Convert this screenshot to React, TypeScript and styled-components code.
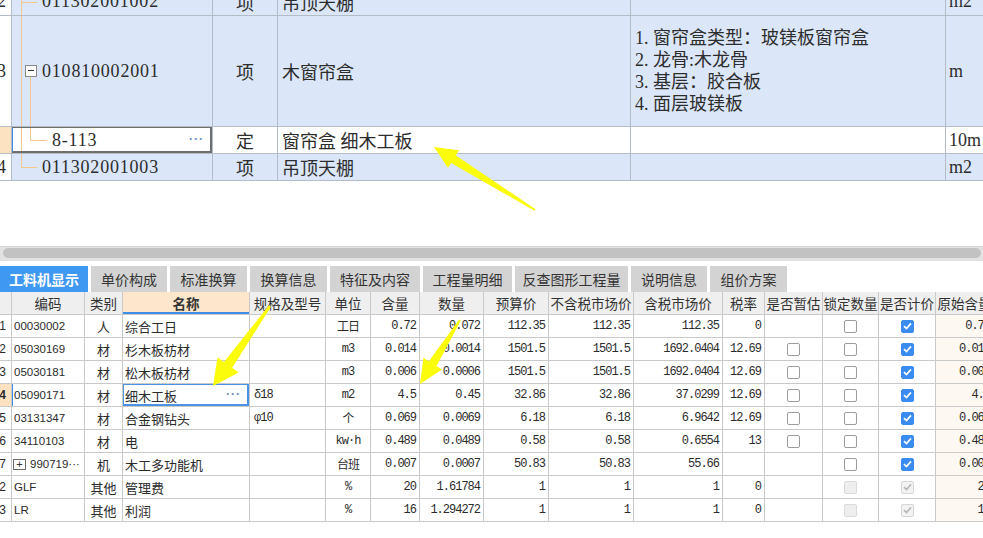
import React from 'react'
import styled, { createGlobalStyle, css } from 'styled-components'

const GlobalStyle = createGlobalStyle`
   html, body {
      margin: 0;
      padding: 0;
      background: #fff;
   }
   body {
      width: 983px;
      height: 538px;
      overflow: hidden;
   }
`

const CJK = '"Noto Sans CJK SC", sans-serif'
const TOP_FONT = '"Liberation Serif", "Noto Sans CJK SC", serif'
const MONO = '"Liberation Mono", "Noto Sans CJK SC", monospace'
const SANS = '"Liberation Sans", "Noto Sans CJK SC", sans-serif'

type Pt = [number, number]

// tapered annotation arrow, tail -> tip
const arrowPoints = (tail: Pt, tip: Pt, headLen: number, headHalf: number, neck: number, tailHalf: number) => {
   const dx = tip[0] - tail[0]
   const dy = tip[1] - tail[1]
   const len = Math.hypot(dx, dy)
   const ux = dx / len
   const uy = dy / len
   const nx = -uy
   const ny = ux
   const bx = tip[0] - ux * headLen
   const by = tip[1] - uy * headLen
   const pts: Pt[] = [
      [tail[0] + nx * tailHalf, tail[1] + ny * tailHalf],
      [bx + nx * neck, by + ny * neck],
      [bx + nx * headHalf, by + ny * headHalf],
      tip,
      [bx - nx * headHalf, by - ny * headHalf],
      [bx - nx * neck, by - ny * neck],
      [tail[0] - nx * tailHalf, tail[1] - ny * tailHalf],
   ]
   return pts.map(p => `${p[0].toFixed(1)},${p[1].toFixed(1)}`).join(' ')
}

/* ---------- upper grid ---------- */

type Tree = 'first' | 'parent' | 'child' | 'last'

type TopRow = {
   no: string
   tree: Tree
   code: string
   kind: string
   name: string
   desc: string[]
   unit: string
   height: number
   selected?: boolean
}

const topRows: TopRow[] = [
   { no: '12', tree: 'first', code: '011302001002', kind: '项', name: '吊顶天棚', desc: [], unit: 'm2', height: 28 },
   {
      no: '13',
      tree: 'parent',
      code: '010810002001',
      kind: '项',
      name: '木窗帘盒',
      desc: ['1. 窗帘盒类型：玻镁板窗帘盒', '2. 龙骨:木龙骨', '3. 基层：胶合板', '4. 面层玻镁板'],
      unit: 'm',
      height: 111,
   },
   { no: '', tree: 'child', code: '8-113', kind: '定', name: '窗帘盒 细木工板', desc: [], unit: '10m', height: 27, selected: true },
   { no: '14', tree: 'last', code: '011302001003', kind: '项', name: '吊顶天棚', desc: [], unit: 'm2', height: 27 },
]

const Page = styled.div`
   position: relative;
   width: 983px;
   height: 538px;
   overflow: hidden;
   background: #fff;
   display: flex;
   flex-direction: column;
`

const TopView = styled.section`
   height: 181px;
   overflow: hidden;
   flex: none;
`

const TopGrid = styled.div<{ $rows: string }>`
   margin-top: -12px;
   width: 1000px;
   display: grid;
   grid-template-columns: 12px 201px 65px 353px 315px 54px;
   grid-template-rows: ${p => p.$rows};
   font-family: ${TOP_FONT};
   font-size: 18px;
   color: #2d2d2d;
`

const TopCell = styled.div<{ $bg: string; $align?: 'left' | 'center' | 'right'; $pad?: number }>`
   position: relative;
   box-sizing: border-box;
   border-right: 1px solid #b4bcc7;
   border-bottom: 1px solid #b4bcc7;
   background: ${p => p.$bg};
   display: flex;
   align-items: center;
   justify-content: ${p => (p.$align === 'center' ? 'center' : p.$align === 'right' ? 'flex-end' : 'flex-start')};
   padding-left: ${p => p.$pad ?? 0}px;
   white-space: nowrap;
   overflow: hidden;
`

const TopNo = styled(TopCell)`
   justify-content: flex-end;
   padding-right: 5px;
`

const CodeText = styled.span`
   letter-spacing: 0.8px;
`

const Desc = styled.div`
   display: flex;
   flex-direction: column;
   line-height: 22px;
`

const VLine = styled.i<{ $x: number; $top: string; $bottom: string }>`
   position: absolute;
   left: ${p => p.$x}px;
   top: ${p => p.$top};
   bottom: ${p => p.$bottom};
   width: 1px;
   background: #f3c88d;
`

const HLine = styled.i<{ $x: number; $w: number }>`
   position: absolute;
   left: ${p => p.$x}px;
   top: 50%;
   width: ${p => p.$w}px;
   height: 1px;
   background: #f3c88d;
`

const Toggle = styled.span`
   position: absolute;
   left: 13px;
   top: 50%;
   margin-top: -6px;
   width: 12px;
   height: 12px;
   box-sizing: border-box;
   border: 1px solid #8a8a8a;
   background: #fff;

   &::after {
      content: '';
      position: absolute;
      left: 2px;
      right: 2px;
      top: 4px;
      height: 1px;
      background: #333;
   }
`

const Ellipsis = styled.span`
   position: absolute;
   right: 8px;
   top: 50%;
   transform: translateY(-55%);
   font-family: ${SANS};
   font-size: 12px;
   font-weight: bold;
   letter-spacing: 1px;
   color: #6a8cc0;
`

const TopSelection = styled.span`
   position: absolute;
   left: -1px;
   top: -1px;
   right: 0;
   bottom: 0;
   border: 2px solid #6e6e6e;
   border-left-color: #3d8be8;
   pointer-events: none;
`

const TreeGuides = ({ tree }: { tree: Tree }) => {
   switch (tree) {
      case 'first':
         return (
            <>
               <VLine $x={9} $top='0' $bottom='0' />
               <HLine $x={9} $w={16} />
            </>
         )
      case 'parent':
         return (
            <>
               <VLine $x={9} $top='0' $bottom='0' />
               <Toggle />
               <VLine $x={18} $top='calc(50% + 6px)' $bottom='0' />
            </>
         )
      case 'child':
         return (
            <>
               <VLine $x={9} $top='0' $bottom='0' />
               <VLine $x={18} $top='0' $bottom='50%' />
               <HLine $x={18} $w={17} />
            </>
         )
      default:
         return (
            <>
               <VLine $x={9} $top='0' $bottom='50%' />
               <HLine $x={9} $w={16} />
            </>
         )
   }
}

const UpperGrid = () => (
   <TopView>
      <TopGrid $rows={topRows.map(r => `${r.height}px`).join(' ')}>
         {topRows.map(r => {
            const bg = r.selected ? '#fff' : '#dbe7f9'
            return (
               <React.Fragment key={r.code}>
                  <TopNo $bg={r.selected ? '#fde2c1' : '#fff'}>{r.no}</TopNo>
                  <TopCell $bg={bg} $pad={r.tree === 'child' ? 40 : 30}>
                     <TreeGuides tree={r.tree} />
                     <CodeText>{r.code}</CodeText>
                     {r.selected && <Ellipsis>···</Ellipsis>}
                     {r.selected && <TopSelection />}
                  </TopCell>
                  <TopCell $bg={bg} $align='center'>{r.kind}</TopCell>
                  <TopCell $bg={bg} $pad={4}>{r.name}</TopCell>
                  <TopCell $bg={bg} $pad={4}>
                     <Desc>
                        {r.desc.map(d => (
                           <span key={d}>{d}</span>
                        ))}
                     </Desc>
                  </TopCell>
                  <TopCell $bg={bg} $pad={3}>{r.unit}</TopCell>
               </React.Fragment>
            )
         })}
      </TopGrid>
   </TopView>
)

/* ---------- scrollbar + tabs ---------- */

const ScrollTrack = styled.div`
   margin-top: 65px;
   height: 15px;
   box-sizing: border-box;
   background: #e2e2e2;
   border-top: 1px solid #d6d6d6;
   padding: 1px 2px 3px 3px;
   flex: none;
`

const Thumb = styled.div`
   height: 100%;
   border-radius: 6px;
   background: #c2c2c2;
`

const TabBar = styled.nav`
   margin-top: 5px;
   height: 26px;
   display: flex;
   gap: 3px;
   flex: none;
`

const Tab = styled.div<{ $w: number; $active?: boolean }>`
   width: ${p => p.$w}px;
   display: flex;
   align-items: center;
   justify-content: center;
   font-family: ${CJK};
   font-size: 14px;
   color: #333;
   background: #d3d3d3;

   ${p =>
      p.$active &&
      css`
         background: #3f98f2;
         color: #fff;
         font-weight: bold;
      `}
`

const tabs: [string, number][] = [
   ['工料机显示', 88],
   ['单价构成', 76],
   ['标准换算', 77],
   ['换算信息', 77],
   ['特征及内容', 90],
   ['工程量明细', 89],
   ['反查图形工程量', 113],
   ['说明信息', 76],
   ['组价方案', 77],
]

/* ---------- lower grid ---------- */

type Box = 'none' | 'off' | 'on' | 'disOff' | 'disOn'

type Item = {
   no: string
   code: string
   expand?: boolean
   kind: string
   name: string
   spec: string
   unit: string
   qty: string
   amount: string
   budget: string
   market: string
   marketTax: string
   tax: string
   est: Box
   lock: Box
   price: Box
   orig: string
   selected?: boolean
}

const items: Item[] = [
   { no: '1', code: '00030002', kind: '人', name: '综合工日', spec: '', unit: '工日', qty: '0.72', amount: '0.072', budget: '112.35', market: '112.35', marketTax: '112.35', tax: '0', est: 'none', lock: 'off', price: 'on', orig: '0.72' },
   { no: '2', code: '05030169', kind: '材', name: '杉木板枋材', spec: '', unit: 'm3', qty: '0.014', amount: '0.0014', budget: '1501.5', market: '1501.5', marketTax: '1692.0404', tax: '12.69', est: 'off', lock: 'off', price: 'on', orig: '0.014' },
   { no: '3', code: '05030181', kind: '材', name: '松木板枋材', spec: '', unit: 'm3', qty: '0.006', amount: '0.0006', budget: '1501.5', market: '1501.5', marketTax: '1692.0404', tax: '12.69', est: 'off', lock: 'off', price: 'on', orig: '0.006' },
   { no: '4', code: '05090171', kind: '材', name: '细木工板', spec: 'δ18', unit: 'm2', qty: '4.5', amount: '0.45', budget: '32.86', market: '32.86', marketTax: '37.0299', tax: '12.69', est: 'off', lock: 'off', price: 'on', orig: '4.5', selected: true },
   { no: '5', code: '03131347', kind: '材', name: '合金钢钻头', spec: 'φ10', unit: '个', qty: '0.069', amount: '0.0069', budget: '6.18', market: '6.18', marketTax: '6.9642', tax: '12.69', est: 'off', lock: 'off', price: 'on', orig: '0.069' },
   { no: '6', code: '34110103', kind: '材', name: '电', spec: '', unit: 'kw·h', qty: '0.489', amount: '0.0489', budget: '0.58', market: '0.58', marketTax: '0.6554', tax: '13', est: 'off', lock: 'off', price: 'on', orig: '0.489' },
   { no: '7', code: '990719···', expand: true, kind: '机', name: '木工多功能机', spec: '', unit: '台班', qty: '0.007', amount: '0.0007', budget: '50.83', market: '50.83', marketTax: '55.66', tax: '', est: 'none', lock: 'off', price: 'on', orig: '0.007' },
   { no: '12', code: 'GLF', kind: '其他', name: '管理费', spec: '', unit: '%', qty: '20', amount: '1.61784', budget: '1', market: '1', marketTax: '1', tax: '0', est: 'none', lock: 'disOff', price: 'disOn', orig: '20' },
   { no: '13', code: 'LR', kind: '其他', name: '利润', spec: '', unit: '%', qty: '16', amount: '1.294272', budget: '1', market: '1', marketTax: '1', tax: '0', est: 'none', lock: 'disOff', price: 'disOn', orig: '16' },
]

const headers = ['', '编码', '类别', '名称', '规格及型号', '单位', '含量', '数量', '预算价', '不含税市场价', '含税市场价', '税率', '是否暂估', '锁定数量', '是否计价', '原始含量']

const LowGrid = styled.div`
   width: 994px;
   display: grid;
   grid-template-columns: 12px 73px 38px 127px 76px 45px 49px 64px 65px 85px 89px 42px 58px 56px 57px 58px;
   grid-auto-rows: 23px;
   flex: none;
`

const fonts = {
   text: css`
      font-family: ${SANS};
      font-size: 13px;
   `,
   num: css`
      font-family: ${MONO};
      font-size: 12px;
      letter-spacing: -1px;
   `,
   code: css`
      font-family: ${SANS};
      font-size: 11.5px;
   `,
}

const Cell = styled.div<{ $align?: 'left' | 'center' | 'right'; $font?: keyof typeof fonts; $bg?: string; $pad?: number }>`
   position: relative;
   box-sizing: border-box;
   border-right: 1px solid #c9c9c9;
   border-bottom: 1px solid #c9c9c9;
   background: ${p => p.$bg ?? '#fff'};
   display: flex;
   align-items: center;
   justify-content: ${p => (p.$align === 'center' ? 'center' : p.$align === 'right' ? 'flex-end' : 'flex-start')};
   padding: 0 ${p => p.$pad ?? 3}px;
   white-space: nowrap;
   overflow: hidden;
   color: #2b2b2b;
   ${p => fonts[p.$font ?? 'text']}
`

const HeadCell = styled(Cell)<{ $sorted?: boolean }>`
   background: #efefef;
   font-family: ${CJK};
   font-size: 13.5px;
   color: #333;
   padding: 0;

   ${p =>
      p.$sorted &&
      css`
         background: #fde6cb;
         font-weight: bold;
         box-shadow: inset 0 -2px 0 #3d8ee8;
      `}
`

const RowNo = styled(Cell)<{ $current?: boolean }>`
   justify-content: flex-end;
   padding: 0 5px 0 0;
   font-family: ${SANS};
   font-size: 12px;

   ${p =>
      p.$current &&
      css`
         background: #fde2c1;
         font-weight: bold;
      `}
`

const CodeCell = styled(Cell)<{ $current?: boolean }>`
   ${p =>
      p.$current &&
      css`
         box-shadow: inset 1px 0 0 #3d8ee8;
      `}
`

const Expand = styled.span`
   width: 13px;
   height: 11px;
   box-sizing: border-box;
   border: 1px solid #6c6c6c;
   margin: 0 4px 0 -1px;
   display: inline-flex;
   align-items: center;
   justify-content: center;
   font-family: ${SANS};
   font-size: 11px;
   line-height: 1;
   color: #333;
`

const CellSelection = styled.span`
   position: absolute;
   left: -1px;
   top: -1px;
   right: 0;
   bottom: 0;
   border: 2px solid #4a92e6;
   pointer-events: none;
`

const boxStyles: Record<Exclude<Box, 'none'>, ReturnType<typeof css>> = {
   off: css`
      background: #fff;
      border-color: #9c9c9c;
   `,
   on: css`
      background: #3a8cf0;
      border-color: #3a8cf0;
   `,
   disOff: css`
      background: #eeeeee;
      border-color: #dadada;
   `,
   disOn: css`
      background: #f3f3f3;
      border-color: #d6d6d6;
   `,
}

const CheckBox = styled.span<{ $state: Exclude<Box, 'none'> }>`
   width: 13px;
   height: 13px;
   box-sizing: border-box;
   border: 1px solid;
   border-radius: 2px;
   display: inline-flex;
   align-items: center;
   justify-content: center;
   ${p => boxStyles[p.$state]}
`

const Check = ({ state }: { state: Box }) => {
   if (state === 'none') return null
   const tick = state === 'on' ? '#fff' : state === 'disOn' ? '#b8b8b8' : null
   return (
      <CheckBox $state={state}>
         {tick && (
            <svg width='9' height='8' viewBox='0 0 9 8'>
               <path d='M1 4.2 L3.5 6.6 L8 1.4' stroke={tick} strokeWidth='1.7' fill='none' />
            </svg>
         )}
      </CheckBox>
   )
}

const LowerGrid = () => (
   <LowGrid>
      {headers.map((h, i) => (
         <HeadCell key={i} $align='center' $sorted={h === '名称'}>
            {h}
         </HeadCell>
      ))}
      {items.map(it => (
         <React.Fragment key={it.no}>
            <RowNo $current={it.selected}>{it.no}</RowNo>
            <CodeCell $font='code' $pad={2} $current={it.selected}>
               {it.expand && <Expand>+</Expand>}
               {it.code}
            </CodeCell>
            <Cell $align='center'>{it.kind}</Cell>
            <Cell $pad={2}>
               {it.name}
               {it.selected && <Ellipsis>···</Ellipsis>}
               {it.selected && <CellSelection />}
            </Cell>
            <Cell $pad={4} $font='num'>{it.spec}</Cell>
            <Cell $align='center' $font='num'>{it.unit}</Cell>
            <Cell $align='right' $font='num'>{it.qty}</Cell>
            <Cell $align='right' $font='num'>{it.amount}</Cell>
            <Cell $align='right' $font='num'>{it.budget}</Cell>
            <Cell $align='right' $font='num'>{it.market}</Cell>
            <Cell $align='right' $font='num'>{it.marketTax}</Cell>
            <Cell $align='right' $font='num'>{it.tax}</Cell>
            <Cell $align='center'>
               <Check state={it.est} />
            </Cell>
            <Cell $align='center'>
               <Check state={it.lock} />
            </Cell>
            <Cell $align='center'>
               <Check state={it.price} />
            </Cell>
            <Cell $align='right' $font='num' $bg='#fdf8f2'>{it.orig}</Cell>
         </React.Fragment>
      ))}
   </LowGrid>
)

/* ---------- annotations ---------- */

const Annotations = styled.svg`
   position: absolute;
   left: 0;
   top: 0;
   pointer-events: none;
`

const arrows = [
   arrowPoints([535, 210], [434, 147], 23, 10.5, 4.5, 1),
   arrowPoints([270, 306], [213, 386], 26, 13, 5, 1.2),
   arrowPoints([460, 320], [420, 384], 24, 11, 4.5, 1),
]

const App = () => (
   <Page>
      <GlobalStyle />
      <UpperGrid />
      <ScrollTrack>
         <Thumb />
      </ScrollTrack>
      <TabBar>
         {tabs.map(([label, w], i) => (
            <Tab key={label} $w={w} $active={i === 0}>
               {label}
            </Tab>
         ))}
      </TabBar>
      <LowerGrid />
      <Annotations width='983' height='538'>
         {arrows.map((pts, i) => (
            <polygon key={i} points={pts} fill='#fbfb0c' />
         ))}
      </Annotations>
   </Page>
)

export default App
